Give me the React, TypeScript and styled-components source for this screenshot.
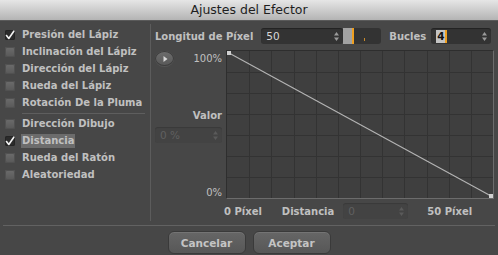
import styled, { createGlobalStyle } from "styled-components";

const Global = createGlobalStyle`
html, body {
  margin: 0;
  padding: 0;
  background: #474747;
}
* { box-sizing: border-box; }
`;

const leftItems = [
  { label: "Presión del Lápiz", checked: true },
  { label: "Inclinación del Lápiz" },
  { label: "Dirección del Lápiz" },
  { label: "Rueda del Lápiz" },
  { label: "Rotación De la Pluma" },
];

const lowerItems = [
  { label: "Dirección Dibujo" },
  { label: "Distancia", checked: true, active: true },
  { label: "Rueda del Ratón" },
  { label: "Aleatoriedad" },
];

function Stepper({ dim }: { dim?: boolean }) {
  const c = dim ? "#5a5a5a" : "#9a9a9a";
  return (
    <svg width="5" height="9" viewBox="0 0 5 9">
      <path d="M2.5 0 L5 3.5 L0 3.5 Z" fill={c} />
      <path d="M2.5 9 L5 5.5 L0 5.5 Z" fill={c} />
    </svg>
  );
}

function Check() {
  return (
    <svg width="10" height="10" viewBox="0 0 10 10">
      <path d="M1.5 5.5 L3.8 8.5 L8.8 1.2" stroke="#f2f2f2" strokeWidth="1.6" fill="none" strokeLinecap="round" strokeLinejoin="round" />
    </svg>
  );
}

function Graph() {
  const w = 266;
  const h = 147;
  const cols = 12;
  const rows = 7;
  const lines = [];
  for (let i = 1; i < cols; i++) {
    const x = Math.round((w * i) / cols) + 0.5;
    lines.push(<line key={"v" + i} x1={x} y1={0} x2={x} y2={h} stroke="#333333" strokeWidth="1" />);
  }
  for (let j = 1; j < rows; j++) {
    const y = Math.round((h * j) / rows) + 0.5;
    lines.push(<line key={"h" + j} x1={0} y1={y} x2={w} y2={y} stroke="#333333" strokeWidth="1" />);
  }
  return (
    <svg width={w} height={h} viewBox={`0 0 ${w} ${h}`} style={{ display: "block" }}>
      {lines}
      <line x1={2} y1={2} x2={w - 2} y2={h - 2} stroke="#b4b4b4" strokeWidth="1.1" />
      <rect x={0} y={0} width={4} height={4} fill="#d0d0d0" />
      <rect x={w - 4} y={h - 4} width={4} height={4} fill="#d0d0d0" />
    </svg>
  );
}

export default function App() {
  return (
    <Window>
      <Global />
      <TitleBar>Ajustes del Efector</TitleBar>
      <Body>
        <LeftPanel>
          {leftItems.map((it) => (
            <Row key={it.label}>
              <Box $checked={it.checked}>{it.checked && <Check />}</Box>
              <Label>{it.label}</Label>
            </Row>
          ))}
          <Divider />
          {lowerItems.map((it) => (
            <Row key={it.label}>
              <Box $checked={it.checked}>{it.checked && <Check />}</Box>
              <Label $active={it.active}>{it.label}</Label>
            </Row>
          ))}
        </LeftPanel>

        <RightPanel>
          <TopRow>
            <Text>Longitud de Píxel</Text>
            <Field $w={82} $ml={8}>
              <FieldValue>50</FieldValue>
              <Stepper />
            </Field>
            <Slider>
              <SliderFill />
              <SliderKnob />
              <SliderTick />
            </Slider>
            <Text $ml={8}>Bucles</Text>
            <Field $w={60} $ml={5}>
              <FieldValue>
                <Selected>4</Selected>
                <Caret />
              </FieldValue>
              <Stepper />
            </Field>
          </TopRow>

          <GraphRow>
            <AxisColumn>
              <AxisTop>
                <PlayButton>
                  <svg width="5" height="6" viewBox="0 0 5 6">
                    <path d="M0.5 0 L4.5 3 L0.5 6 Z" fill="#d8d8d8" />
                  </svg>
                </PlayButton>
                <AxisText>100%</AxisText>
              </AxisTop>
              <ValorLabel>Valor</ValorLabel>
              <Field $w={67} $disabled>
                <FieldValue $disabled>0 %</FieldValue>
                <Stepper dim />
              </Field>
              <AxisBottom>0%</AxisBottom>
            </AxisColumn>
            <GraphFrame>
              <Graph />
            </GraphFrame>
          </GraphRow>

          <AxisRow>
            <Text>0 Píxel</Text>
            <Text $ml={20}>Distancia</Text>
            <Field $w={65} $ml={9} $disabled>
              <FieldValue $disabled>0</FieldValue>
              <Stepper dim />
            </Field>
            <Text $ml={19}>50 Píxel</Text>
          </AxisRow>
        </RightPanel>
      </Body>
      <Footer>
        <Button>Cancelar</Button>
        <Button>Aceptar</Button>
      </Footer>
    </Window>
  );
}

const Window = styled.div`
width: 498px;
height: 255px;
overflow: hidden;
background: #474747;
display: flex;
flex-direction: column;
font-family: "DejaVu Sans", "Noto Sans", sans-serif;
`;

const TitleBar = styled.div`
height: 21px;
flex: none;
background: linear-gradient(#e6e6e6, #b4b4b4);
border-bottom: 1px solid #5a5a5a;
color: #1e1e1e;
font-size: 12.5px;
line-height: 20px;
text-align: center;
`;

const Body = styled.div`
display: flex;
height: 204px;
flex: none;
`;

/* 왼쪽 체크 목록 */
const LeftPanel = styled.div`
width: 151px;
flex: none;
margin: 3px 0 4px;
padding-top: 2px;
border-right: 1px solid #5c5c5c;
`;

const Row = styled.div`
display: flex;
align-items: center;
height: 17px;
padding-left: 5px;
`;

const Box = styled.div<{ $checked?: boolean }>`
width: 10px;
height: 10px;
border-radius: 2px;
margin-right: 7px;
flex: none;
display: flex;
align-items: center;
justify-content: center;
background: ${(p) => (p.$checked ? "#2b2b2b" : "linear-gradient(#6c6c6c, #585858)")};
box-shadow: inset 0 0 0 1px ${(p) => (p.$checked ? "#242424" : "#515151")};
`;

const Label = styled.span<{ $active?: boolean }>`
font-size: 10px;
font-weight: 700;
color: #c0c0c0;
line-height: 14px;
padding: 0 1px;
margin-left: -1px;
background: ${(p) => (p.$active ? "#6c6c6c" : "transparent")};
white-space: nowrap;
`;

const Divider = styled.div`
height: 1px;
background: #5e5e5e;
margin: 2px 5px 1px 22px;
`;

/* 오른쪽 그래프 영역 */
const RightPanel = styled.div`
flex: 1;
padding: 7px 0 0 4px;
display: flex;
flex-direction: column;
`;

const TopRow = styled.div`
display: flex;
align-items: center;
height: 16px;
`;

const Text = styled.span<{ $ml?: number }>`
font-size: 10px;
font-weight: 700;
color: #c0c0c0;
margin-left: ${(p) => p.$ml ?? 0}px;
white-space: nowrap;
`;

const Field = styled.div<{ $w: number; $ml?: number; $disabled?: boolean }>`
width: ${(p) => p.$w}px;
height: 16px;
margin-left: ${(p) => p.$ml ?? 0}px;
flex: none;
display: flex;
align-items: center;
justify-content: space-between;
padding: 0 4px 0 5px;
border-radius: 3px;
background: ${(p) => (p.$disabled ? "#434343" : "#333333")};
box-shadow: inset 0 1px 1px rgba(0, 0, 0, ${(p) => (p.$disabled ? 0.15 : 0.35)});
`;

const FieldValue = styled.span<{ $disabled?: boolean }>`
display: flex;
align-items: center;
font-size: 10.5px;
color: ${(p) => (p.$disabled ? "#606060" : "#d8d8d8")};
`;

const Selected = styled.span`
background: #c4c4c4;
color: #111;
font-weight: 700;
padding: 0 1px;
line-height: 13px;
`;

const Caret = styled.span`
width: 2px;
height: 13px;
background: #f0a020;
`;

const Slider = styled.div`
position: relative;
width: 38px;
height: 16px;
flex: none;
display: flex;
background: #333333;
border-radius: 0 3px 3px 0;
`;

const SliderFill = styled.div`
width: 9px;
background: #a2a2a2;
`;

const SliderKnob = styled.div`
width: 2px;
background: #f0a020;
`;

const SliderTick = styled.div`
position: absolute;
left: 21px;
top: 10px;
width: 1px;
height: 3px;
background: #c98a2a;
`;

const GraphRow = styled.div`
display: flex;
margin-top: 6px;
`;

const AxisColumn = styled.div`
width: 67px;
display: flex;
flex-direction: column;
margin-right: 4px;
`;

const AxisTop = styled.div`
display: flex;
align-items: center;
justify-content: space-between;
margin-top: 1px;
height: 15px;
`;

const PlayButton = styled.div`
width: 19px;
height: 15px;
border-radius: 50%;
display: flex;
align-items: center;
justify-content: center;
padding-left: 1px;
background: linear-gradient(#6e6e6e, #575757);
box-shadow: inset 0 0 0 1px #3e3e3e, 0 1px 0 #555;
`;

const AxisText = styled.span`
font-size: 10px;
color: #c0c0c0;
`;

const ValorLabel = styled(Text)`
text-align: right;
margin-top: 44px;
margin-bottom: 5px;
line-height: 12px;
`;

const AxisBottom = styled(AxisText)`
text-align: right;
margin-top: 44px;
`;

const GraphFrame = styled.div`
width: 268px;
height: 149px;
background: #3f3f3f;
border-style: solid;
border-width: 1px;
border-color: #2e2e2e #6c6c6c #6c6c6c #2e2e2e;
flex: none;
`;

const AxisRow = styled.div`
display: flex;
align-items: center;
height: 16px;
margin-top: 4px;
padding-left: 69px;
`;

const Footer = styled.div`
flex: none;
margin: 0 3px;
border-top: 1px solid #626262;
padding-top: 5px;
display: flex;
justify-content: center;
gap: 7px;
`;

const Button = styled.button`
width: 78px;
height: 23px;
border-radius: 6px;
border: 1px solid #3a3a3a;
background: linear-gradient(#666666, #575757);
box-shadow: inset 0 1px 0 #747474;
color: #c4c4c4;
font-family: "DejaVu Sans", sans-serif;
font-weight: 700;
font-size: 10.5px;
padding: 0;
`;
